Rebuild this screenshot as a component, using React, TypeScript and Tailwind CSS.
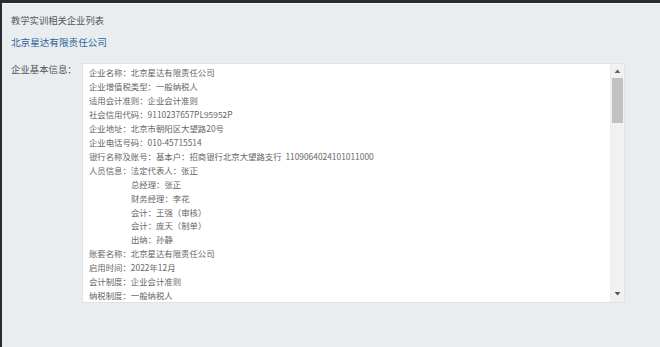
import React from 'react';

const lines: { text: string; indent?: boolean }[] = [
  { text: '企业名称：北京星达有限责任公司' },
  { text: '企业增值税类型：一般纳税人' },
  { text: '适用会计准则：企业会计准则' },
  { text: '社会信用代码：9110237657PL95952P' },
  { text: '企业地址：北京市朝阳区大望路20号' },
  { text: '企业电话号码：010-45715514' },
  { text: '银行名称及账号：基本户：招商银行北京大望路支行  1109064024101011000' },
  { text: '人员信息：法定代表人：张正' },
  { text: '总经理：张正', indent: true },
  { text: '财务经理：李花', indent: true },
  { text: '会计：王强（审核）', indent: true },
  { text: '会计：庞天（制单）', indent: true },
  { text: '出纳：孙静', indent: true },
  { text: '账套名称：北京星达有限责任公司' },
  { text: '启用时间：2022年12月' },
  { text: '会计制度：企业会计准则' },
  { text: '纳税制度：一般纳税人' },
];

export default function App() {
  return (
    <div
      className="w-[660px] h-[347px] overflow-hidden bg-[#e9edf0] border-t-[3px] border-l-[2px] border-[#2b2b2b] text-[#555]"
      style={{ fontFamily: '"Noto Sans CJK SC", "Noto Sans", sans-serif' }}
    >
      <div className="border-t border-[#f4f6f7] pl-[9px] pt-[10px]">
        <div className="text-[9.3px] leading-[13px]">教学实训相关企业列表</div>
        <div className="mt-[9px] text-[9.6px] leading-[13px] text-[#2d6496]">北京星达有限责任公司</div>
        <div className="mt-[14px] flex">
          <div className="w-[71px] pt-[0px] text-[9.4px] leading-[13px]">企业基本信息：</div>
          <div className="flex h-[240px] w-[543px] border border-[#dfe3e6] bg-white">
            <div className="flex-1 overflow-hidden pl-[6px] pt-[2px] text-[8.4px] leading-[13.95px] text-[#666]">
              {lines.map((l, i) => (
                <div key={i} className={`whitespace-pre ${l.indent ? 'pl-[42px]' : ''}`}>
                  {l.text}
                </div>
              ))}
            </div>
            <div className="flex w-[14px] flex-col items-center bg-[#f1f1f1] border-l border-[#ececec]">
              <svg width="7" height="5" viewBox="0 0 7 5" className="mt-[5px]">
                <path d="M3.5 0.5 L6.5 4 L0.5 4 Z" fill="#666" />
              </svg>
              <div className="mt-[4px] h-[45px] w-[11px] bg-[#c1c1c1]" />
              <div className="flex-1" />
              <svg width="7" height="5" viewBox="0 0 7 5" className="mb-[6px]">
                <path d="M0.5 1 L6.5 1 L3.5 4.5 Z" fill="#555" />
              </svg>
            </div>
          </div>
        </div>
      </div>
    </div>
  );
}
